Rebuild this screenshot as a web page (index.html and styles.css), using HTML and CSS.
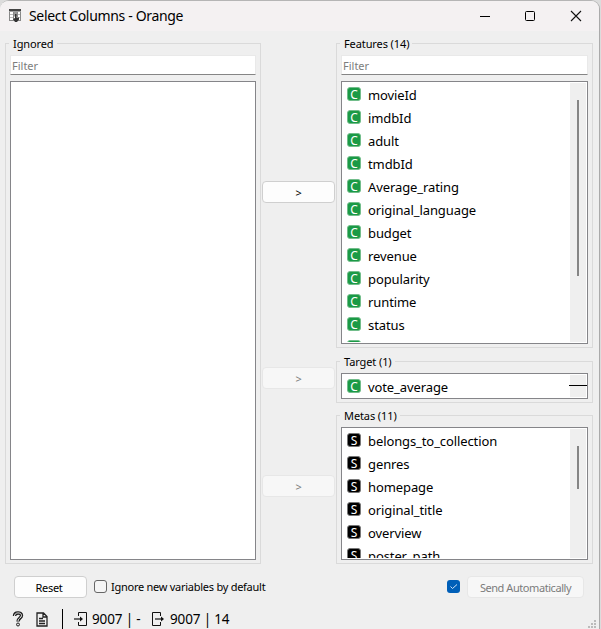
FILE: index.html
```html
<!DOCTYPE html>
<html lang="en">
<head>
<meta charset="utf-8">
<title>Select Columns - Orange</title>
<link rel="stylesheet" href="styles.css">
</head>
<body>
<div class="window">
  <header class="titlebar">
    <svg class="app-icon" width="13" height="14" viewBox="0 0 13 14"><path fill="#fff" d="M0 0h12v12H0z"/><path fill="#444" d="M0 0h12v2.500H0z"/><path stroke="#888" d="M.5 3v9M4.500 3v9M8.500 3v5M11.500 3v9M0 11.500h12" fill="none"/><path stroke="#bbb" d="M1 5.500h3M1 8.500h3M9 5.500h2M9 8.500h2"/><path fill="#999" d="M5 2.500h3v5H5z"/><path fill="#333" d="M6 5h1.500v3.500H10v2l-2 2.500H6l-2-3 2-1z"/></svg>
    <h1>Select Columns - Orange</h1>
    <svg class="controls" width="100" height="12" viewBox="0 0 100 12" fill="none" stroke="#111"><path d="M0 6.500h10" stroke="#000"/><rect x="45.500" y="1.500" width="9" height="9" rx="1" stroke="#000"/><path d="M91 1l10 10M101 1L91 11" stroke-width="1.100"/></svg>
  </header>
  <main class="panels">
    <section class="group ignored">
      <h2 class="legend">Ignored</h2>
      <div class="filter">Filter</div>
      <div class="list"></div>
    </section>
    <div class="moves">
      <button class="btn">&gt;</button>
      <button class="btn off second">&gt;</button>
      <button class="btn off third">&gt;</button>
    </div>
    <div class="right">
      <section class="group features">
        <h2 class="legend">Features (14)</h2>
        <div class="filter">Filter</div>
        <div class="list">
          <ul>
            <li><i>C</i><span>movieId</span></li>
            <li><i>C</i><span>imdbId</span></li>
            <li><i>C</i><span>adult</span></li>
            <li><i>C</i><span>tmdbId</span></li>
            <li><i>C</i><span>Average_rating</span></li>
            <li><i>C</i><span>original_language</span></li>
            <li><i>C</i><span>budget</span></li>
            <li><i>C</i><span>revenue</span></li>
            <li><i>C</i><span>popularity</span></li>
            <li><i>C</i><span>runtime</span></li>
            <li><i>C</i><span>status</span></li>
            <li><i></i></li>
          </ul>
          <div class="scroll"><div class="thumb"></div></div>
        </div>
      </section>
      <section class="group target">
        <h2 class="legend">Target (1)</h2>
        <div class="list">
          <ul><li><i>C</i><span>vote_average</span></li></ul>
          <div class="scroll"><div class="dash"></div></div>
        </div>
      </section>
      <section class="group metas">
        <h2 class="legend">Metas (11)</h2>
        <div class="list">
          <ul>
            <li><i>S</i><span>belongs_to_collection</span></li>
            <li><i>S</i><span>genres</span></li>
            <li><i>S</i><span>homepage</span></li>
            <li><i>S</i><span>original_title</span></li>
            <li><i>S</i><span>overview</span></li>
            <li><i>S</i><span>poster_path</span></li>
          </ul>
          <div class="scroll"><div class="thumb"></div></div>
        </div>
      </section>
    </div>
  </main>
  <div class="actions">
    <button class="btn reset">Reset</button>
    <span class="check"></span>
    <span class="check-label">Ignore new variables by default</span>
    <span class="check on"><svg width="13" height="13" viewBox="0 0 13 13"><path d="M3.500 6.500l2 2L10 4.500" fill="none" stroke="#cde0f5"/></svg></span>
    <button class="btn off send">Send Automatically</button>
  </div>
  <footer class="status">
    <svg width="12" height="16" viewBox="0 0 12 16"><path d="M2.500 5C2.500 1 9.500 1 9.500 4.500C9.500 7 6 7 6 10.500" fill="none" stroke="#222" stroke-width="3.400"/><path d="M2.500 5C2.500 1 9.500 1 9.500 4.500C9.500 7 6 7 6 10" fill="none" stroke="#eee" stroke-width="1"/><circle cx="6" cy="13.500" r="1.500" fill="#ddd" stroke="#222"/></svg>
    <svg class="doc" width="12" height="15" viewBox="0 0 12 15" fill="none" stroke="#222" stroke-width="1.300"><path d="M1 1h6.500l3.500 3.500V14H1zM7 1v4h4M3 6.500h4M3 9h6M3 11.500h6"/></svg>
    <span class="bar"></span>
    <svg class="in" width="14" height="15" viewBox="0 0 14 15"><path d="M4.500 4V.5h8v13h-8V10" fill="none" stroke="#111"/><path d="M0 7h7" stroke="#111" stroke-width="1.200"/><path d="M6 4.500l3 2.500-3 2.500z" fill="#111"/></svg>
    <span class="count in-count">9007 | -</span>
    <svg class="out" width="14" height="15" viewBox="0 0 14 15"><path d="M9.500 4V.5h-8v13h8V10" fill="none" stroke="#111"/><path d="M4 7h7" stroke="#111" stroke-width="1.200"/><path d="M10 4.500L13 7l-3 2.500z" fill="#111"/></svg>
    <span class="count">9007 | 14</span>
    <svg class="grip" width="10" height="8" viewBox="0 0 10 8" fill="#bbb"><path d="M6 0h2v2H6zM3 3h2v2H3zM6 3h2v2H6zM0 6h2v2H0zM3 6h2v2H3zM6 6h2v2H6z"/></svg>
  </footer>
</div>
</body>
</html>
```
FILE: styles.css
```css
* { box-sizing: border-box; }
body { margin: 0; width: 601px; height: 629px; overflow: hidden; background: #dcdcdc; font: 11px/13px "Noto Sans", "Open Sans", sans-serif; letter-spacing: -.26px; color: #000; }
h1, h2, ul { margin: 0; padding: 0; font-weight: 400; }
.window { width: 600px; height: 629px; background: #efefef; border-top: 1px solid #b5b5b5; border-right: 1px solid #aaa; border-radius: 9px 9px 0 0; overflow: hidden; display: flex; flex-direction: column; }
.titlebar { height: 30px; flex: none; background: #f4f1f2; display: flex; align-items: center; padding-left: 9px; }
.app-icon { margin-right: 7px; }
h1 { font-size: 14px; line-height: 20px; letter-spacing: -.33px; white-space: nowrap; }
.controls { margin-left: auto; margin-right: 19px; overflow: visible; }
.panels { display: flex; height: 521px; margin: 12px 0 0 5px; flex: none; }
.group { border: 1px solid #dadada; padding: 0 4px 3px; display: flex; flex-direction: column; }
.ignored { width: 256px; }
.legend { align-self: flex-start; height: 13px; margin: -7px 0 5px -1px; padding: 0 3px 0 4px; background: #efefef; font-size: 11px; line-height: 14px; letter-spacing: -.1px; white-space: nowrap; }
.filter { height: 20px; flex: none; margin-bottom: 6px; padding: 3px 1px; background: #fff; border: 1px solid #e9e9e9; border-bottom-color: #858585; color: #7d7d7d; letter-spacing: 0; }
.list { flex: 1; min-height: 0; border: 1px solid #858589; background: #fff; padding: 1px; display: flex; overflow: hidden; }
.moves { width: 75px; padding: 138px 1px 0; }
.btn { display: block; width: 73px; height: 22px; padding: 0; border: 1px solid #cfcfcf; border-radius: 4px; background: #fdfdfd; font: inherit; letter-spacing: inherit; color: #000; }
.btn.off { background: #f7f7f7; border-color: #e7e7e7; color: #7c7c7c; }
.second { margin-top: 164px; }
.third { margin-top: 86px; }
.right { width: 257px; display: flex; flex-direction: column; }
.features { height: 305px; margin-bottom: 13px; }
.target { height: 42px; margin-bottom: 12px; }
.metas { height: 149px; }
ul { flex: 1; list-style: none; padding-left: 4px; overflow: hidden; padding-top: 1px; }
li { height: 23px; display: flex; align-items: center; gap: 7px; font-size: 13px; line-height: 19px; letter-spacing: -.1px; white-space: nowrap; }
li i { width: 14px; height: 14px; margin-top: -3px; border-radius: 3px; border: 1px solid #72bd8b; background: #1b9a46; color: #fff; font-style: normal; font-size: 12px; line-height: 13px; text-align: center; }
.metas li i { background: #000; border-color: #777; }
.scroll { width: 16px; background: #efefef; display: flex; justify-content: center; }
.thumb { width: 2px; height: 176px; margin-top: 17px; background: #858585; }
.metas .thumb { height: 43px; }
.dash { width: 18px; height: 1px; flex: none; background: #000; margin-top: 10px; margin-left: -1px; }
.target .legend, .metas .legend { margin-bottom: 5px; }
.actions { display: flex; align-items: flex-start; padding: 12px 0 0 14px; height: 45px; flex: none; }
.reset { padding-right: 3px; }
.check { width: 13px; height: 13px; margin: 4px 4px 0 7px; border: 1px solid #666; border-radius: 3px; background: #f5f5f5; }
.check-label { margin-top: 4px; white-space: nowrap; }
.on { margin: 4px 7px 0 auto; border: 0; background: #005fb8; }
.on svg { display: block; }
.send { width: 117px; margin-right: 15px; letter-spacing: -.44px; }
.status { display: flex; align-items: center; height: 20px; padding-left: 12px; flex: none; }
.doc { margin-left: 12px; }
.bar { width: 1px; height: 20px; background: #000; margin: 0 11px 0 14px; }
.count { font-size: 13.500px; line-height: 18px; letter-spacing: -.15px; white-space: nowrap; }
.in { margin-right: 4px; }
.in-count { width: 59px; }
.out { margin-right: 5px; }
.grip { margin: 10px 1px 0 auto; }
```
